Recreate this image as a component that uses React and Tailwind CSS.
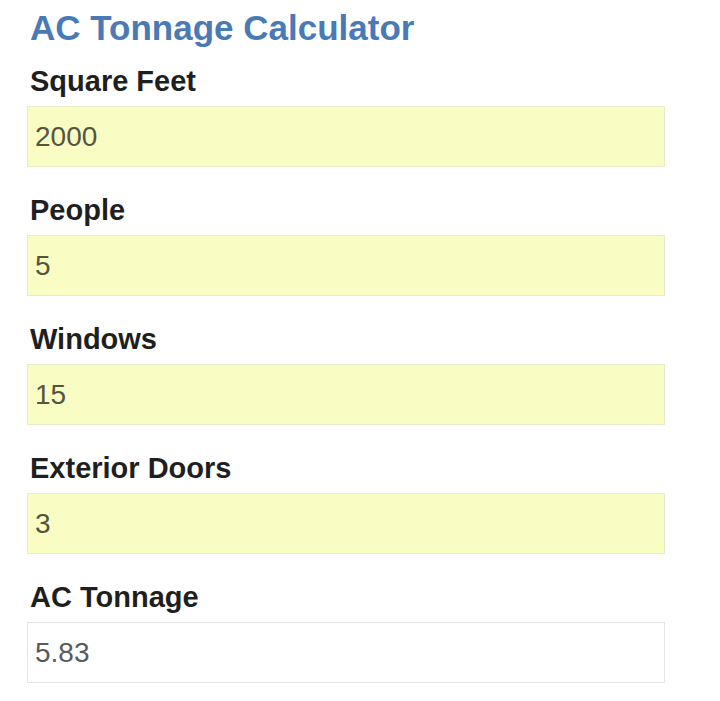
import React from 'react'

const fields = [
  { label: 'Square Feet', value: '2000' },
  { label: 'People', value: '5' },
  { label: 'Windows', value: '15' },
  { label: 'Exterior Doors', value: '3' },
]

const Field = ({ label, value, result }) => (
  <div className="mb-[29px]">
    <label className="block text-[29px] leading-none font-bold text-[#1f1f1f] pl-[3px]">{label}</label>
    <input
      type="text"
      readOnly
      value={value}
      className={
        result
          ? 'mt-[10px] block w-[638px] h-[61px] px-[7px] text-[28px] text-[#5a5a5a] bg-white border border-[#e6e6e6] outline-none'
          : 'mt-[10px] block w-[638px] h-[61px] px-[7px] text-[28px] text-[#55553f] bg-[#f9fcc3] border border-[#e9ecc8] outline-none'
      }
    />
  </div>
)

export default function App() {
  return (
    <div className="min-h-[701px] bg-white pl-[27px] pt-[10px] font-['Liberation_Sans',Arial,sans-serif]">
      {/* Header */}
      <h1 className="text-[35px] leading-none font-bold text-[#4a7ab6] pl-[3px] mb-[22px]">AC Tonnage Calculator</h1>

      {/* Inputs */}
      {fields.map((f) => (
        <Field key={f.label} label={f.label} value={f.value} />
      ))}

      {/* Result */}
      <Field label="AC Tonnage" value="5.83" result />
    </div>
  )
}
